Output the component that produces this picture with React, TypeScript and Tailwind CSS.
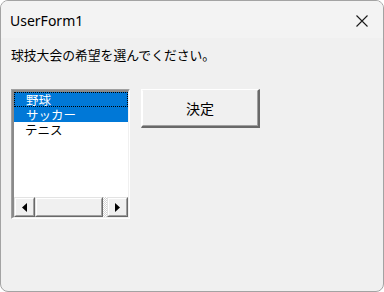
import React from "react";

const jp = { fontFamily: '"MS UI Gothic", "Noto Sans CJK JP", sans-serif' };

function ScrollBtn({ dir }: { dir: "l" | "r" }) {
  return (
    <div className="w-[21px] h-full bg-[#f0f0f0] border-t border-l border-t-[#e3e3e3] border-l-[#e3e3e3] border-b border-r border-b-[#696969] border-r-[#696969] flex">
      <div className="flex-1 border-t border-l border-t-white border-l-white border-b border-r border-b-[#a0a0a0] border-r-[#a0a0a0] flex items-center justify-center">
        <svg width="5" height="9" viewBox="0 0 5 9">
          {dir === "l" ? <path d="M5 0 L0 4.5 L5 9 Z" fill="#000" /> : <path d="M0 0 L5 4.5 L0 9 Z" fill="#000" />}
        </svg>
      </div>
    </div>
  );
}

export default function App() {
  return (
    <div className="w-[384px] h-[292px] bg-white">
      <div className="w-full h-full rounded-[8px] border border-[#a3a3a3] bg-[#f0f0f0] flex flex-col overflow-hidden">
        <div className="h-[37px] shrink-0 bg-[#f3f3f3] flex items-center justify-between pl-[9px] pr-[15px] pt-[3px]">
          <span className="text-[14px] text-black leading-none" style={{ fontFamily: '"Segoe UI", "Noto Sans", sans-serif' }}>
            UserForm1
          </span>
          <svg width="12" height="12" viewBox="0 0 12 12">
            <path d="M0.5 0.5 L11.5 11.5 M11.5 0.5 L0.5 11.5" stroke="#1a1a1a" strokeWidth="1.1" />
          </svg>
        </div>
        <div className="flex-1 pl-[10px]">
          <div className="mt-[8px] h-[18px] text-[12.8px] leading-[18px] text-black" style={jp}>
            球技大会の希望を選んでください。
          </div>
          <div className="mt-[25px] flex items-start">
            <div className="w-[119px] h-[130px] flex border-t border-l border-t-[#a0a0a0] border-l-[#a0a0a0] border-b border-r border-b-white border-r-white">
              <div className="flex-1 flex border-t-2 border-l-2 border-t-[#8a8a8a] border-l-[#8a8a8a] border-b border-r border-b-[#f0f0f0] border-r-[#f0f0f0]">
                <div className="flex-1 bg-white flex flex-col">
                  <div className="flex-1 text-[12.5px]" style={jp}>
                    <div className="h-[15px] leading-[15px] bg-[#0078d7] text-white pl-[12px] outline outline-1 outline-dotted outline-black -outline-offset-1">野球</div>
                    <div className="h-[15px] leading-[15px] bg-[#0078d7] text-white pl-[12px]">サッカー</div>
                    <div className="h-[15px] leading-[15px] text-black pl-[11px]">テニス</div>
                  </div>
                  <div className="h-[20px] flex">
                    <ScrollBtn dir="l" />
                    <div className="w-[68px] h-full bg-[#f0f0f0] border-t border-l border-t-[#e3e3e3] border-l-[#e3e3e3] border-b border-r border-b-[#696969] border-r-[#696969] flex">
                      <div className="flex-1 border-t border-l border-t-white border-l-white border-b border-r border-b-[#a0a0a0] border-r-[#a0a0a0]" />
                    </div>
                    <div className="flex-1 h-full bg-[#e8e8e8]" style={{ backgroundImage: "repeating-conic-gradient(#ffffff 0 25%, #d4d4d4 0 50%)", backgroundSize: "2px 2px" }} />
                    <ScrollBtn dir="r" />
                  </div>
                </div>
              </div>
            </div>
            <div className="ml-[11px] w-[119px] h-[39px] flex border-t border-l border-t-white border-l-white border-b-2 border-r-2 border-b-[#696969] border-r-[#696969]">
              <div className="flex-1 flex items-center justify-center border-t border-l border-t-[#f0f0f0] border-l-white border-b border-r border-b-[#a0a0a0] border-r-[#a0a0a0] text-[14px] text-black" style={jp}>
                決定
              </div>
            </div>
          </div>
        </div>
      </div>
    </div>
  );
}
